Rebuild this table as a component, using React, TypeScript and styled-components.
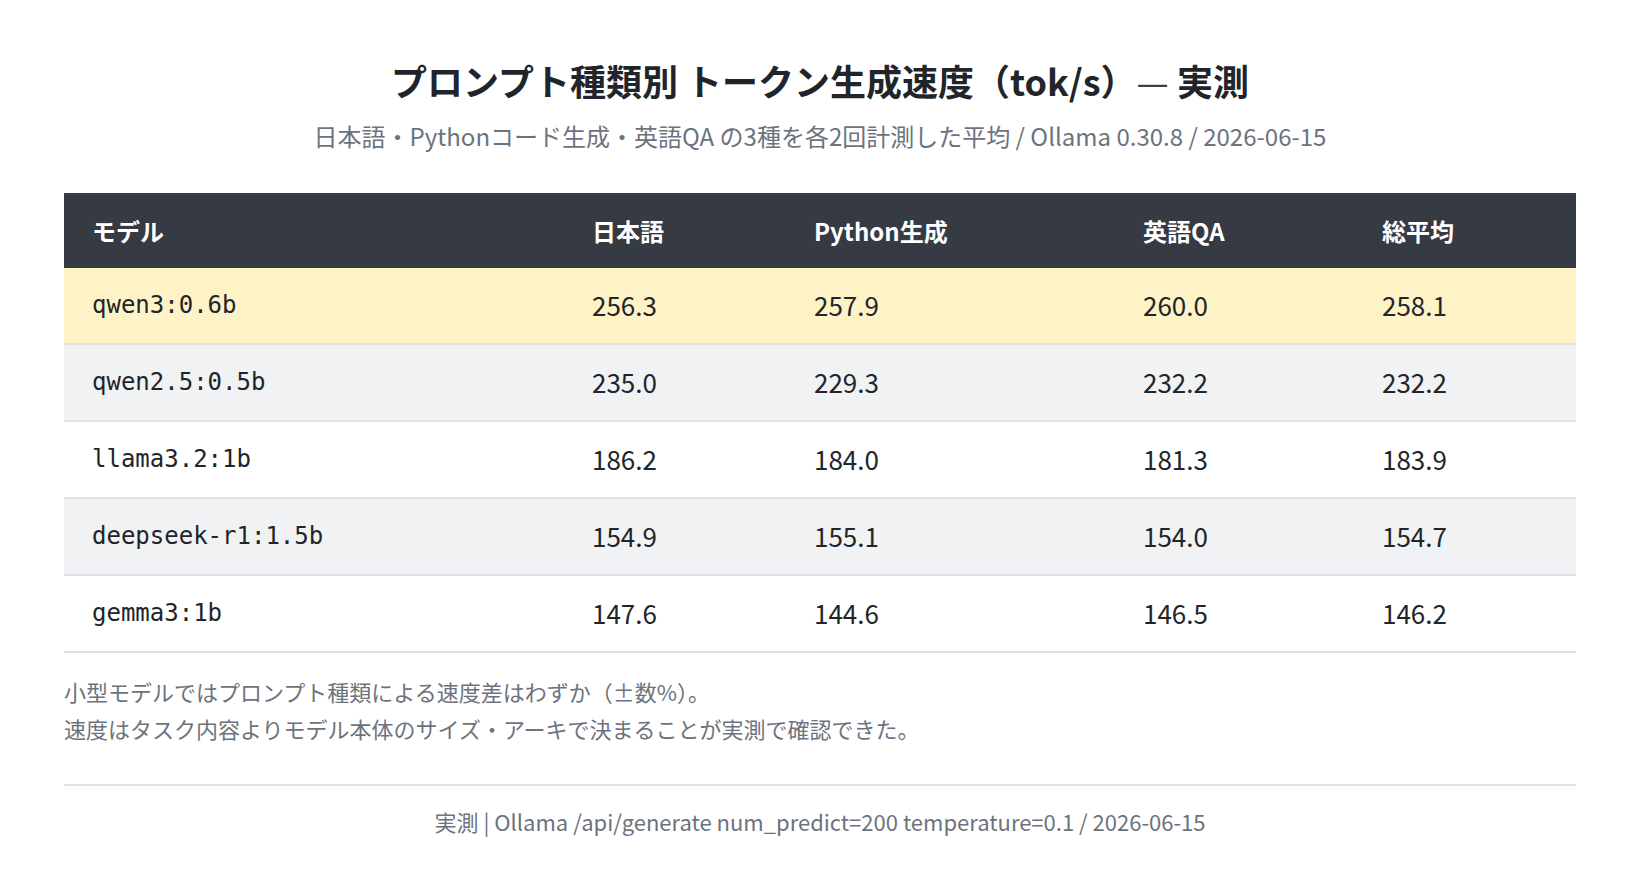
import React from "react";
import styled, { createGlobalStyle } from "styled-components";

const GlobalStyle = createGlobalStyle`
  html, body { margin: 0; padding: 0; background: #ffffff; }
  body { font-family: "Noto Sans CJK JP", "Noto Sans", sans-serif; color: #212529; }
  * { box-sizing: border-box; }
`;

const Page = styled.div`
  width: 1640px;
  padding: 58px 64px 0;
  display: flex;
  flex-direction: column;
`;

const Title = styled.h1`
  margin: 0;
  text-align: center;
  font-size: 36px;
  line-height: 44px;
  font-weight: 700;
  color: #212529;
`;

const Dash = styled.span`
  font-weight: 400;
  color: #3a3f45;
`;

const Subtitle = styled.p`
  margin: 18px 0 0;
  text-align: center;
  font-size: 24px;
  line-height: 32px;
  color: #6c737d;
`;

const Table = styled.div`
  margin-top: 41px;
  display: flex;
  flex-direction: column;
`;

const cols = "500fr 222fr 329fr 239fr 222fr";

const HeadRow = styled.div`
  display: grid;
  grid-template-columns: ${cols};
  height: 75px;
  align-items: center;
  background: #363a42;
`;

const HeadCell = styled.div`
  padding-left: 28px;
  font-size: 24px;
  font-weight: 700;
  color: #ffffff;
`;

const Row = styled.div<{ $bg: string }>`
  display: grid;
  grid-template-columns: ${cols};
  height: 77px;
  padding-bottom: 2px;
  align-items: center;
  background: ${(p) => p.$bg};
  border-bottom: 2px solid #dee1e6;
`;

const ModelCell = styled.div`
  padding-left: 28px;
  font-family: "DejaVu Sans Mono", monospace;
  font-size: 24px;
  color: #212529;
`;

const NumCell = styled.div`
  padding-left: 28px;
  font-size: 26px;
  color: #212529;
`;

const Notes = styled.div`
  margin-top: 20px;
  font-size: 22px;
  line-height: 37px;
  color: #6c737d;
`;

const Divider = styled.hr`
  margin: 37px 0 0;
  border: none;
  height: 2px;
  background: #dee1e6;
`;

const Footer = styled.p`
  margin: 19px 0 0;
  text-align: center;
  font-size: 22px;
  line-height: 32px;
  color: #6c737d;
`;

type R = { model: string; v: [string, string, string, string]; bg: string };

const rows: R[] = [
  { model: "qwen3:0.6b", v: ["256.3", "257.9", "260.0", "258.1"], bg: "#fef3c7" },
  { model: "qwen2.5:0.5b", v: ["235.0", "229.3", "232.2", "232.2"], bg: "#f1f2f4" },
  { model: "llama3.2:1b", v: ["186.2", "184.0", "181.3", "183.9"], bg: "#ffffff" },
  { model: "deepseek-r1:1.5b", v: ["154.9", "155.1", "154.0", "154.7"], bg: "#f1f2f4" },
  { model: "gemma3:1b", v: ["147.6", "144.6", "146.5", "146.2"], bg: "#ffffff" },
];

export default function App() {
  return (
    <>
      <GlobalStyle />
      <Page>
        <Title>
          プロンプト種類別 トークン生成速度（tok/s）<Dash>—</Dash> 実測
        </Title>
        <Subtitle>
          日本語・Pythonコード生成・英語QA の3種を各2回計測した平均 / Ollama 0.30.8 / 2026-06-15
        </Subtitle>
        <Table>
          <HeadRow>
            <HeadCell>モデル</HeadCell>
            <HeadCell>日本語</HeadCell>
            <HeadCell>Python生成</HeadCell>
            <HeadCell>英語QA</HeadCell>
            <HeadCell>総平均</HeadCell>
          </HeadRow>
          {rows.map((r) => (
            <Row key={r.model} $bg={r.bg}>
              <ModelCell>{r.model}</ModelCell>
              {r.v.map((x, i) => (
                <NumCell key={i}>{x}</NumCell>
              ))}
            </Row>
          ))}
        </Table>
        <Notes>
          小型モデルではプロンプト種類による速度差はわずか（±数%）。
          <br />
          速度はタスク内容よりモデル本体のサイズ・アーキで決まることが実測で確認できた。
        </Notes>
        <Divider />
        <Footer>実測 | Ollama /api/generate num_predict=200 temperature=0.1 / 2026-06-15</Footer>
      </Page>
    </>
  );
}
